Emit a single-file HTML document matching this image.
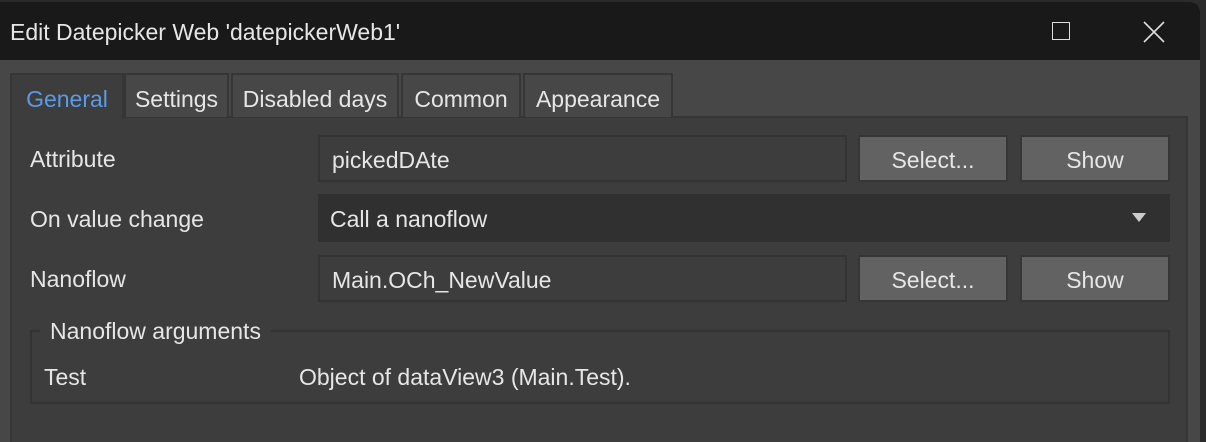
<!DOCTYPE html>
<html><head><style>
body{margin:0;width:1206px;height:438px;background:#2b2b2b;overflow:hidden;font-family:"Liberation Sans",sans-serif;color:#e6e6e6;position:relative}
.win{position:absolute;left:0;top:2px;width:1200px;height:440px;background:#474747;border-radius:0 10px 0 0;overflow:hidden}
.title{position:absolute;left:0;top:0;width:1200px;height:58px;background:#191919;font-size:23px;line-height:60px;padding-left:10px;box-sizing:border-box}
.tab{position:absolute;top:71px;height:44px;border:2px solid #363636;border-bottom:none;background:#474747;font-size:23px;line-height:48px;text-align:center;box-sizing:border-box}
.panel{position:absolute;left:10px;top:114px;width:1178px;height:340px;background:#3d3d3d;border:2px solid #363636;box-sizing:border-box}
.lbl{position:absolute;left:30px;font-size:23px}
.inp{position:absolute;background:#3d3d3d;border:2px solid #333;box-sizing:border-box;font-size:23px;padding-left:12px}
.btn{position:absolute;background:#626262;border:2px solid #363636;box-sizing:border-box;font-size:23px;text-align:center}
</style></head><body>
<div class="win">
<div class="title">Edit Datepicker Web 'datepickerWeb1'</div>
<div style="position:absolute;left:1052px;top:20px;width:18px;height:18px;border:1.5px solid #ddd;box-sizing:border-box"></div>
<svg style="position:absolute;left:1143px;top:19px" width="22" height="22"><path d="M1 1L21 21M21 1L1 21" stroke="#ddd" stroke-width="1.6"/></svg>
<div class="panel"></div>
<div class="tab" style="left:10px;width:114px;height:46px;background:#3d3d3d;color:#5a9ae6">General</div>
<div class="tab" style="left:124px;width:105px">Settings</div>
<div class="tab" style="left:231px;width:168px">Disabled days</div>
<div class="tab" style="left:401px;width:120px">Common</div>
<div class="tab" style="left:523px;width:150px">Appearance</div>
<div class="lbl" style="top:144px">Attribute</div>
<div class="inp" style="left:318px;top:133px;width:529px;height:47px;line-height:47px">pickedDAte</div>
<div class="btn" style="left:858px;top:133px;width:150px;height:47px;line-height:47px">Select...</div>
<div class="btn" style="left:1020px;top:133px;width:150px;height:47px;line-height:47px">Show</div>
<div class="lbl" style="top:204px">On value change</div>
<div class="inp" style="left:318px;top:192px;width:852px;height:48px;line-height:51px;background:#303030;border:none">Call a nanoflow</div>
<svg style="position:absolute;left:1132px;top:211px" width="14" height="9"><path d="M0 0H14L7 9Z" fill="#ccc"/></svg>
<div class="lbl" style="top:264px">Nanoflow</div>
<div class="inp" style="left:318px;top:253px;width:529px;height:47px;line-height:47px">Main.OCh_NewValue</div>
<div class="btn" style="left:858px;top:253px;width:150px;height:47px;line-height:47px">Select...</div>
<div class="btn" style="left:1020px;top:253px;width:150px;height:47px;line-height:47px">Show</div>
<div style="position:absolute;left:30px;top:328px;width:1140px;height:74px;border:2px solid #333;box-sizing:border-box"></div>
<div style="position:absolute;left:40px;top:316px;padding:0 10px;background:#3d3d3d;font-size:23px">Nanoflow arguments</div>
<div class="lbl" style="left:44px;top:362px">Test</div>
<div class="lbl" style="left:299px;top:362px">Object of dataView3 (Main.Test).</div>
</div>
</body></html>
